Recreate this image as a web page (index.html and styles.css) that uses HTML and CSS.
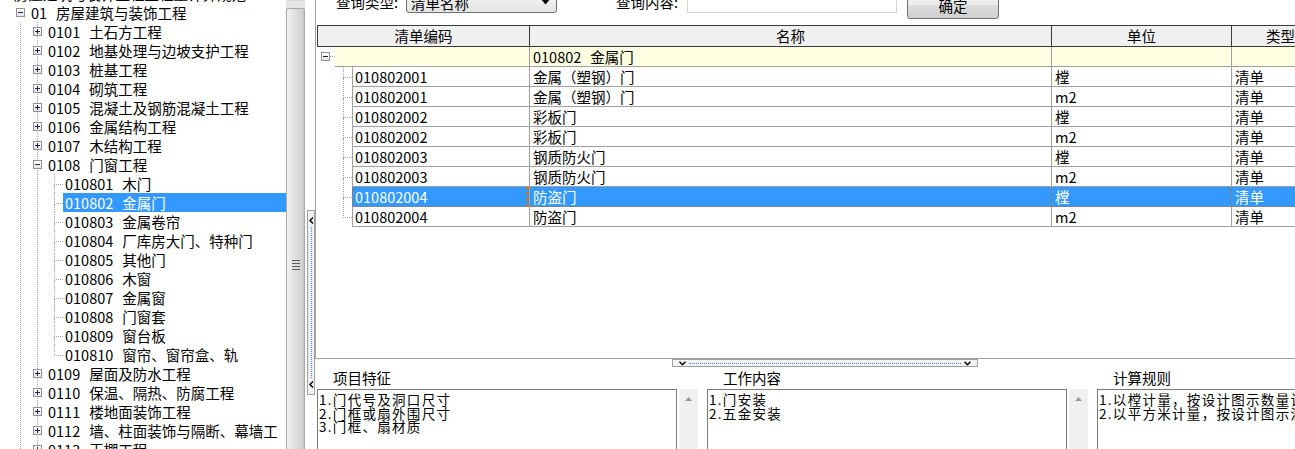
FILE: index.html
```html
<!DOCTYPE html>
<html lang="zh-CN">

<head>
  <meta charset="utf-8">
  <title>清单指引</title>
  <link rel="stylesheet" href="styles.css">
</head>

<body>
  <div class="app">
    <div class="left">
      <div class="tree">
        <div class="node root"><span class="lbl">房屋建筑与装饰工程工程量计算规范</span></div>
        <div class="node l1"><i class="box minus"></i><span class="lbl"><span class="code">01</span>房屋建筑与装饰工程</span></div>
        <div class="kids1">
          <div class="sib">
            <div class="node"><i class="box plus"></i><span class="lbl"><span class="code">0101</span>土石方工程</span></div>
            <div class="node"><i class="box plus"></i><span class="lbl"><span class="code">0102</span>地基处理与边坡支护工程</span></div>
            <div class="node"><i class="box plus"></i><span class="lbl"><span class="code">0103</span>桩基工程</span></div>
            <div class="node"><i class="box plus"></i><span class="lbl"><span class="code">0104</span>砌筑工程</span></div>
            <div class="node"><i class="box plus"></i><span class="lbl"><span class="code">0105</span>混凝土及钢筋混凝土工程</span></div>
            <div class="node"><i class="box plus"></i><span class="lbl"><span class="code">0106</span>金属结构工程</span></div>
            <div class="node"><i class="box plus"></i><span class="lbl"><span class="code">0107</span>木结构工程</span></div>
            <div class="node"><i class="box minus"></i><span class="lbl"><span class="code">0108</span>门窗工程</span></div>
            <div class="kids2">
              <div class="node leaf"><i class="stub"></i><span class="lbl"><span class="code">010801</span>木门</span></div>
              <div class="node leaf selected"><i class="stub"></i><span class="lbl"><span class="code">010802</span>金属门</span></div>
              <div class="node leaf"><i class="stub"></i><span class="lbl"><span class="code">010803</span>金属卷帘</span></div>
              <div class="node leaf"><i class="stub"></i><span class="lbl"><span class="code">010804</span>厂库房大门、特种门</span></div>
              <div class="node leaf"><i class="stub"></i><span class="lbl"><span class="code">010805</span>其他门</span></div>
              <div class="node leaf"><i class="stub"></i><span class="lbl"><span class="code">010806</span>木窗</span></div>
              <div class="node leaf"><i class="stub"></i><span class="lbl"><span class="code">010807</span>金属窗</span></div>
              <div class="node leaf"><i class="stub"></i><span class="lbl"><span class="code">010808</span>门窗套</span></div>
              <div class="node leaf"><i class="stub"></i><span class="lbl"><span class="code">010809</span>窗台板</span></div>
              <div class="node leaf last"><i class="stub"></i><span class="lbl"><span class="code">010810</span>窗帘、窗帘盒、轨</span></div>
            </div>
            <div class="node"><i class="box plus"></i><span class="lbl"><span class="code">0109</span>屋面及防水工程</span></div>
            <div class="node"><i class="box plus"></i><span class="lbl"><span class="code">0110</span>保温、隔热、防腐工程</span></div>
            <div class="node"><i class="box plus"></i><span class="lbl"><span class="code">0111</span>楼地面装饰工程</span></div>
            <div class="node"><i class="box plus"></i><span class="lbl"><span class="code">0112</span>墙、柱面装饰与隔断、幕墙工</span></div>
            <div class="node"><i class="box plus"></i><span class="lbl"><span class="code">0113</span>天棚工程</span></div>
          </div>
        </div>
      </div>
      <div class="vscroll">
        <div class="thumb"><i class="grip"></i></div>
      </div>
    </div>

    <div class="vsplit">
      <div class="vbar">
        <svg width="5" height="7" viewBox="0 0 5 7"><polyline points="4,0.5 1,3.5 4,6.5" fill="none" stroke="#000" stroke-width="1.4"/></svg>
        <i class="vdots"></i>
        <svg width="5" height="7" viewBox="0 0 5 7"><polyline points="4,0.5 1,3.5 4,6.5" fill="none" stroke="#000" stroke-width="1.4"/></svg>
      </div>
    </div>

    <div class="right">
      <div class="upper">
        <div class="query">
          <span class="q-label">查询类型:</span>
          <div class="select">清单名称<svg width="9" height="6" viewBox="0 0 9 6"><polygon points="0,0 9,0 4.5,5.5" fill="#000"/></svg></div>
          <span class="q-label q-second">查询内容:</span>
          <div class="input"></div>
          <div class="btn">确定</div>
        </div>

        <div class="grid">
          <div class="gr gh">
            <div>清单编码</div>
            <div>名称</div>
            <div>单位</div>
            <div>类型</div>
          </div>
          <div class="gr group">
            <div class="c0">
              <span class="gut gut-group"><i class="box minus"></i><i class="hdot"></i></span>
              <span class="cc"></span>
            </div>
            <div><span class="code">010802</span>金属门</div>
            <div></div>
            <div></div>
          </div>
          <div class="gr">
            <div class="c0"><span class="gut"><i class="stub"></i></span><span class="cc">010802001</span></div>
            <div>金属（塑钢）门</div>
            <div>樘</div>
            <div>清单</div>
          </div>
          <div class="gr">
            <div class="c0"><span class="gut"><i class="stub"></i></span><span class="cc">010802001</span></div>
            <div>金属（塑钢）门</div>
            <div>m2</div>
            <div>清单</div>
          </div>
          <div class="gr">
            <div class="c0"><span class="gut"><i class="stub"></i></span><span class="cc">010802002</span></div>
            <div>彩板门</div>
            <div>樘</div>
            <div>清单</div>
          </div>
          <div class="gr">
            <div class="c0"><span class="gut"><i class="stub"></i></span><span class="cc">010802002</span></div>
            <div>彩板门</div>
            <div>m2</div>
            <div>清单</div>
          </div>
          <div class="gr">
            <div class="c0"><span class="gut"><i class="stub"></i></span><span class="cc">010802003</span></div>
            <div>钢质防火门</div>
            <div>樘</div>
            <div>清单</div>
          </div>
          <div class="gr">
            <div class="c0"><span class="gut"><i class="stub"></i></span><span class="cc">010802003</span></div>
            <div>钢质防火门</div>
            <div>m2</div>
            <div>清单</div>
          </div>
          <div class="gr sel">
            <div class="c0"><span class="gut"><i class="stub"></i></span><span class="cc">010802004</span></div>
            <div>防盗门</div>
            <div>樘</div>
            <div>清单</div>
          </div>
          <div class="gr last">
            <div class="c0"><span class="gut"><i class="stub"></i></span><span class="cc">010802004</span></div>
            <div>防盗门</div>
            <div>m2</div>
            <div>清单</div>
          </div>
        </div>
      </div>

      <div class="hsplit">
        <div class="hbar">
          <svg width="7" height="5" viewBox="0 0 7 5"><polyline points="0.5,0.8 3.5,3.8 6.5,0.8" fill="none" stroke="#000" stroke-width="1.4"/></svg>
          <i class="hdots"></i>
          <svg width="7" height="5" viewBox="0 0 7 5"><polyline points="0.5,0.8 3.5,3.8 6.5,0.8" fill="none" stroke="#000" stroke-width="1.4"/></svg>
        </div>
      </div>

      <div class="details">
        <div class="panel">
          <div class="p-title">项目特征</div>
          <div class="p-body">
            <div class="tbox">1.门代号及洞口尺寸<br>2.门框或扇外围尺寸<br>3.门框、扇材质</div>
            <div class="sb"><svg width="7" height="4" viewBox="0 0 7 4"><polygon points="0,4 7,4 3.5,0" fill="#9a9a9a"/></svg></div>
          </div>
        </div>
        <div class="panel">
          <div class="p-title">工作内容</div>
          <div class="p-body">
            <div class="tbox">1.门安装<br>2.五金安装</div>
            <div class="sb"><svg width="7" height="4" viewBox="0 0 7 4"><polygon points="0,4 7,4 3.5,0" fill="#9a9a9a"/></svg></div>
          </div>
        </div>
        <div class="panel">
          <div class="p-title">计算规则</div>
          <div class="p-body">
            <div class="tbox">1.以樘计量，按设计图示数量计算<br>2.以平方米计量，按设计图示洞口尺寸以面积计算</div>
          </div>
        </div>
      </div>
    </div>
  </div>
</body>

</html>
```

FILE: styles.css
```css
* {
  box-sizing: border-box;
}

body {
  margin: 0;
  overflow: hidden;
  background: #fff;
  color: #000;
  font-family: "Noto Sans CJK SC", sans-serif;
  font-size: 14.5px;
  line-height: 19px;
}

.app {
  display: flex;
  width: 1295px;
  height: 449px;
  overflow: hidden;
}

/* left tree */
.left {
  display: flex;
  flex: none;
  width: 305px;
  height: 449px;
  overflow: hidden;
}

.tree {
  width: 286px;
  flex: none;
  margin-top: -16px;
  white-space: nowrap;
  overflow: hidden;
}

.node {
  display: flex;
  align-items: center;
  height: 19px;
}

.root {
  padding-left: 12px;
}

.l1 {
  padding-left: 16px;
}

.kids1 {
  margin-left: 20px;
  border-left: 1px dotted #a0a0a0;
}

.sib {
  margin-left: 16px;
  border-left: 1px dotted #a0a0a0;
}

.sib > .node > .box {
  margin-left: -5px;
}

.kids2 {
  margin-left: 16px;
}

.lbl {
  flex: 1;
  padding: 0 2px;
  height: 19px;
}

.code {
  margin-right: 9px;
}

.selected .lbl {
  background: #3399ff;
  color: #fff;
}

.box {
  display: grid;
  place-items: center;
  flex: none;
  width: 9px;
  height: 9px;
  margin-right: 4px;
  border: 1px solid #919191;
  background: linear-gradient(#fff, #e4e4e4);
}

.box::before,
.box::after {
  content: "";
  grid-area: 1 / 1;
  background: #202050;
}

.box::before {
  width: 5px;
  height: 1px;
}

.plus.box::after {
  width: 1px;
  height: 5px;
}

.stub {
  display: flex;
  flex-direction: column;
  flex: none;
  width: 9px;
  height: 19px;
}

.stub::before {
  content: "";
  height: 10px;
  border-left: 1px dotted #a0a0a0;
  border-bottom: 1px dotted #a0a0a0;
}

.stub::after {
  content: "";
  flex: 1;
  border-left: 1px dotted #a0a0a0;
}

.last .stub::after {
  border-left: none;
}

.vscroll {
  width: 19px;
  flex: none;
  padding-top: 7px;
  background: #e6e6e6;
  border-top: 1px solid #d6d6d6;
}

.thumb {
  display: flex;
  justify-content: center;
  height: 460px;
  border: 1px solid #a8a8a8;
  border-radius: 2px;
  background: linear-gradient(to right, #f3f3f3, #e2e2e2 40%, #d3d3d3 85%, #c6c6c6);
}

.grip {
  width: 8px;
  height: 10px;
  margin-top: 251px;
  background: repeating-linear-gradient(to bottom, #5a5a5a 0 1px, transparent 1px 3px);
}

/* vertical splitter */
.vsplit {
  width: 10px;
  flex: none;
}

.vbar {
  display: flex;
  flex-direction: column;
  align-items: center;
  width: 8px;
  height: 185px;
  margin: 210px 0 0 2px;
  padding: 6px 0;
  border: 1px solid #a0a0a0;
  background: #f0f0f0;
}

.vdots {
  flex: 1;
  margin: 3px 0;
  border-left: 1px dotted #3c8ce8;
}

/* right side */
.right {
  flex: 1;
  min-width: 0;
  overflow: hidden;
}

.upper {
  height: 359px;
  border-left: 1px solid #a0a0a0;
  border-bottom: 1px solid #a0a0a0;
  overflow: hidden;
}

.query {
  display: flex;
  align-items: flex-start;
  height: 25px;
  padding-left: 20px;
}

.q-label {
  width: 70px;
  margin-top: -8px;
  white-space: nowrap;
}

.q-second {
  width: 71px;
  margin-left: 59px;
}

.select {
  display: flex;
  justify-content: space-between;
  align-items: center;
  width: 151px;
  height: 22px;
  margin-top: -9px;
  padding: 0 6px 0 4px;
  border: 1px solid #707070;
  border-radius: 3px;
  background: linear-gradient(#f6f6f6, #e4e4e4);
}

.input {
  width: 210px;
  height: 22px;
  margin-top: -9px;
  border: 1px solid #d4d4d4;
  background: #fff;
}

.btn {
  display: flex;
  justify-content: center;
  align-items: center;
  width: 92px;
  height: 27px;
  margin: -8px 0 0 10px;
  border: 1px solid #707070;
  border-radius: 3px;
  background: linear-gradient(#f2f2f2, #ebebeb 50%, #dddddd 50%, #cfcfcf);
}

/* grid */
.grid {
  width: 1013px;
  margin-left: 1px;
}

.gr {
  display: grid;
  grid-template-columns: 213px 522px 180px 98px;
  height: 20px;
}

.gr > div {
  padding-left: 3px;
  line-height: 19px;
  white-space: nowrap;
  overflow: hidden;
  border-right: 1px solid #a0a0a0;
  border-bottom: 1px solid #a0a0a0;
}

.gr > .c0 {
  display: flex;
  padding-left: 0;
  border-bottom: none;
}

.gh {
  height: 22px;
  border-top: 1px solid #3a3a3a;
  background: #f0f0f0;
}

.gh > div {
  padding-left: 0;
  text-align: center;
  line-height: 20px;
  border-right-color: #3a3a3a;
  border-bottom-color: #3a3a3a;
}

.gh > div:first-child {
  border-left: 1px solid #3a3a3a;
}

.gut {
  display: flex;
  flex: none;
  width: 35px;
  padding-left: 26px;
}

.gut-group {
  width: 18px;
  padding-left: 4px;
  align-items: flex-start;
}

.gut-group .box {
  margin: 5px 0 0 0;
}

.hdot {
  width: 5px;
  height: 10px;
  border-bottom: 1px dotted #a0a0a0;
}

.cc {
  flex: 1;
  padding-left: 2px;
  line-height: 19px;
  border-left: 1px solid #a0a0a0;
  border-bottom: 1px solid #a0a0a0;
}

.group > div,
.group .cc {
  background: #ffffe1;
}

.group > .c0 {
  background: #fff;
}

.group .cc {
  border-left: none;
}

.sel > div:not(.c0),
.sel .cc {
  background: #3399ff;
  color: #fff;
  border-bottom: 1px dotted #b8753a;
  border-right-style: dotted;
  border-right-color: #b8753a;
}

.sel .cc {
  border-left: 1px dotted #b8753a;
}

/* horizontal splitter */
.hsplit {
  height: 8px;
}

.hbar {
  display: flex;
  align-items: center;
  width: 306px;
  height: 8px;
  margin-left: 357px;
  padding: 0 6px;
  border: 1px solid #a0a0a0;
  background: #f4f4f4;
}

.hdots {
  flex: 1;
  margin: 0 3px;
  border-top: 1px dotted #3c8ce8;
}

/* detail panels */
.details {
  display: flex;
  gap: 9px;
  padding-left: 2px;
}

.panel {
  flex: none;
  width: 381px;
}

.panel:last-child {
  width: 300px;
}

.p-title {
  height: 22px;
  line-height: 22px;
  padding-left: 16px;
}

.p-body {
  display: flex;
}

.tbox {
  width: 360px;
  height: 70px;
  padding: 3px 0 0 1px;
  font-size: 13.5px;
  line-height: 13.5px;
  letter-spacing: 1.3px;
  white-space: nowrap;
  overflow: hidden;
  border: 1px solid #7a7a7a;
}

.sb {
  display: flex;
  justify-content: center;
  width: 19px;
  height: 70px;
  margin-left: 2px;
  padding-top: 8px;
  background: #f0f0f0;
}
```
